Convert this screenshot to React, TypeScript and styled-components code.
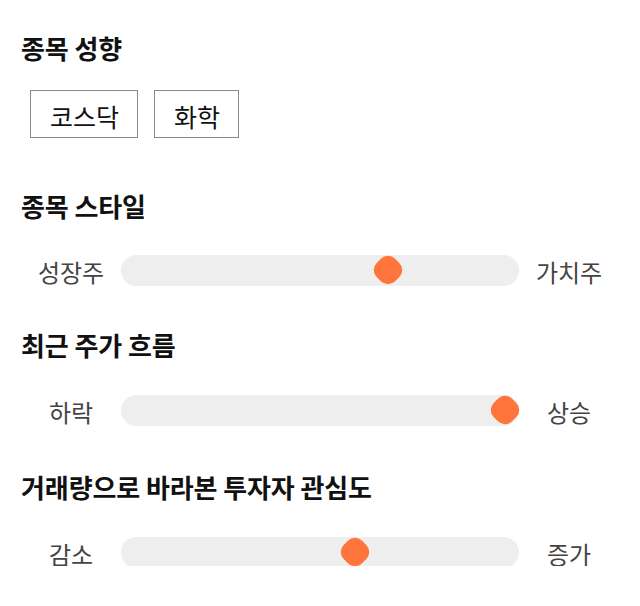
import React from "react";
import styled, { createGlobalStyle } from "styled-components";

const Global = createGlobalStyle`
  html, body { margin: 0; padding: 0; background: #fff; }
  body { font-family: "Noto Sans CJK KR", "Noto Sans", sans-serif; }
`;

const Page = styled.div`
  width: 640px;
  box-sizing: border-box;
  padding: 33px 21px 0 21px;
  display: flex;
  flex-direction: column;
`;

const Section = styled.section<{ $gap: number }>`
  display: flex;
  flex-direction: column;
  margin-top: ${(p) => p.$gap}px;
`;

const Heading = styled.h2`
  margin: 0;
  font-size: 26px;
  line-height: 30px;
  height: 30px;
  font-weight: 700;
  color: #111;
  letter-spacing: -0.1px;
`;

const ChipRow = styled.div`
  display: flex;
  gap: 16px;
  margin-top: 27px;
  padding-left: 9px;
`;

const Chip = styled.button`
  all: unset;
  box-sizing: border-box;
  height: 48px;
  padding: 3px 18px 0 19px;
  border: 1px solid #8a8a8a;
  font-family: "Noto Sans CJK KR", sans-serif;
  font-size: 25px;
  color: #111;
  display: flex;
  align-items: center;
  justify-content: center;
`;

const SliderRow = styled.div<{ $top: number }>`
  display: grid;
  grid-template-columns: 100px 1fr 100px;
  align-items: center;
  height: 31px;
  margin-top: ${(p) => p.$top}px;
`;

const SideLabel = styled.span`
  text-align: center;
  font-size: 24px;
  color: #444;
  line-height: 31px;
  padding-top: 3px;
`;

const Track = styled.div`
  position: relative;
  height: 31px;
  border-radius: 16px;
  background: #eeeeee;
`;

const Thumb = styled.div`
  position: absolute;
  top: 1px;
  width: 29px;
  height: 29px;
  display: flex;
  align-items: center;
  justify-content: center;
  &::before {
    content: "";
    flex: none;
    width: 26px;
    height: 26px;
    border-radius: 10px;
    background: #ff753b;
    transform: rotate(45deg);
  }
`;

const Slider = ({ left, right, value, top }: { left: string; right: string; value: number; top: number }) => (
  <SliderRow $top={top}>
    <SideLabel>{left}</SideLabel>
    <Track>
      <Thumb style={{ left: `calc(${value} * (100% - 29px))` }} />
    </Track>
    <SideLabel>{right}</SideLabel>
  </SliderRow>
);

export default function App() {
  return (
    <>
      <Global />
      <Page>
        <Section $gap={0}>
          <Heading>종목 성향</Heading>
          <ChipRow>
            <Chip>코스닥</Chip>
            <Chip>화학</Chip>
          </ChipRow>
        </Section>
        <Section $gap={53}>
          <Heading>종목 스타일</Heading>
          <Slider left="성장주" right="가치주" value={0.683} top={32} />
        </Section>
        <Section $gap={46}>
          <Heading>최근 주가 흐름</Heading>
          <Slider left="하락" right="상승" value={1} top={33} />
        </Section>
        <Section $gap={48}>
          <Heading>거래량으로 바라본 투자자 관심도</Heading>
          <Slider left="감소" right="증가" value={0.596} top={33} />
        </Section>
      </Page>
    </>
  );
}
